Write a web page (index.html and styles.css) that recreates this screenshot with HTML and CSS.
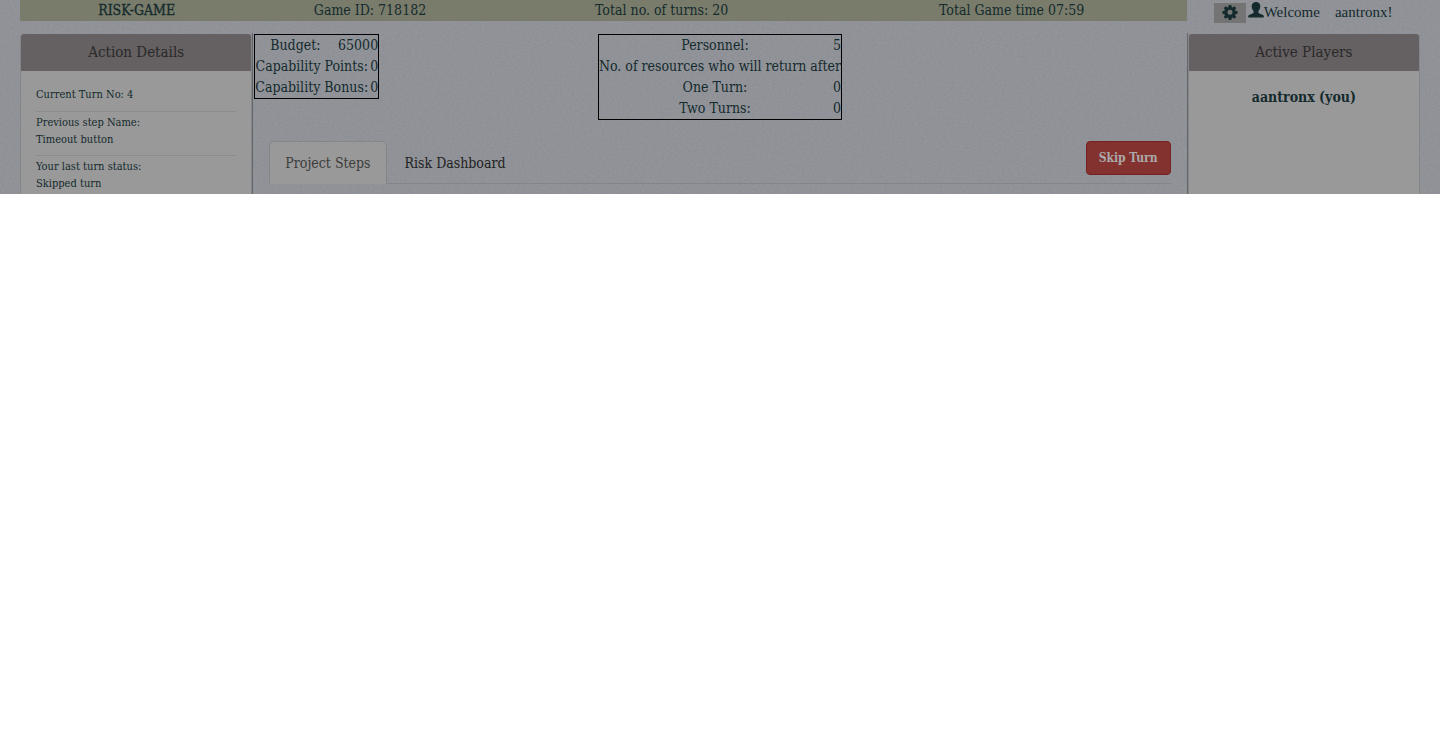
FILE: index.html
```
<!DOCTYPE html>
<html lang="en">
<head>
<meta charset="utf-8">
<meta name="viewport" content="width=device-width, initial-scale=1">
<title>Risk-Game</title>
<link rel="stylesheet" href="styles.css">
</head>
<body>
<div class="app">
  <svg class="texture" aria-hidden="true">
    <filter id="weave" x="0" y="0" width="100%" height="100%">
      <feTurbulence type="fractalNoise" baseFrequency="0.4 0.55" numOctaves="2" seed="4"/>
      <feColorMatrix values="0 0 0 0 0.2  0 0 0 0 0.22  0 0 0 0 0.26  1.8 0 0 0 -0.65"/>
    </filter>
    <rect width="100%" height="100%" filter="url(#weave)"/>
  </svg>
  <header class="top">
    <div class="bar brand">RISK-GAME</div>
    <div class="bar">Game ID: 718182</div>
    <div class="bar">Total no. of turns: 20</div>
    <div class="bar">Total Game time 07:59</div>
    <div class="user">
      <button class="gear" type="button" aria-label="Settings">
        <svg viewBox="0 0 16 16" width="16" height="16"><path fill="currentColor" fill-rule="evenodd" d="M6.700 1h2.600l.4 2 1 .4 1.700-1.100 1.800 1.800-1.100 1.700.4 1 2 .4v2.600l-2 .4-.4 1 1.100 1.700-1.800 1.800-1.700-1.100-1 .4-.4 2H6.700l-.4-2-1-.4-1.700 1.100-1.800-1.800 1.100-1.700-.4-1-2-.4V7.200l2-.4.4-1L1.800 4.100l1.800-1.800 1.700 1.100 1-.4zM8 5.700a2.500 2.500 0 1 0 0 5 2.500 2.500 0 0 0 0-5z"/></svg>
      </button>
      <svg class="person" viewBox="0 0 16 16" width="16" height="16" aria-hidden="true"><path fill="currentColor" d="M8 0c2.700 0 4.300 1.600 4.300 4.300 0 2-.7 3.700-1.900 4.700v1.200c0 .6.300.9.900 1.200l3.200 1.300c.9.400 1.300 1 1.300 2.100v.700H.2v-.7c0-1.100.4-1.700 1.300-2.100l3.200-1.300c.6-.3.900-.6.900-1.200V9C4.400 8 3.700 6.300 3.700 4.300 3.700 1.600 5.300 0 8 0z"/></svg>
      <span>Welcome</span><span class="name">aantronx!</span>
    </div>
  </header>
  <main class="columns">
    <section class="panel actions">
      <h2 class="panel-title">Action Details</h2>
      <div class="details">
        <p>Current Turn No: 4</p>
        <p>Previous step Name:<br>Timeout button</p>
        <p>Your last turn status:<br>Skipped turn</p>
      </div>
    </section>
    <section class="center">
      <div class="stats">
        <table class="stat">
          <colgroup><col class="lead"><col><col></colgroup>
          <tr><th scope="row">Budget:</th><td colspan="2">65000</td></tr>
          <tr><th scope="row" colspan="2">Capability Points:</th><td>0</td></tr>
          <tr><th scope="row" colspan="2">Capability Bonus:</th><td>0</td></tr>
        </table>
        <table class="stat people">
          <tr><th scope="row">Personnel:</th><td>5</td></tr>
          <tr><th colspan="2">No. of resources who will return after</th></tr>
          <tr><th scope="row">One Turn:</th><td>0</td></tr>
          <tr><th scope="row">Two Turns:</th><td>0</td></tr>
        </table>
      </div>
      <nav class="tabs">
        <a class="tab active" href="#steps">Project Steps</a>
        <a class="tab" href="#risk">Risk Dashboard</a>
        <button class="skip" type="button">Skip Turn</button>
      </nav>
    </section>
    <section class="panel players">
      <h2 class="panel-title">Active Players</h2>
      <p class="player">aantronx (you)</p>
    </section>
  </main>
</div>
</body>
</html>
```
FILE: styles.css
```
* { box-sizing: border-box; }
body { margin: 0; background: #fff; color: #142a2d; font: 14px/21px "DejaVu Serif Condensed", "DejaVu Serif", serif; }
h2, p { margin: 0; font-weight: normal; }
.app { position: relative; padding: 0 20px; background: #929499; overflow: hidden; }
.texture { position: absolute; inset: 0; width: 100%; height: 100%; opacity: .35; }
.top { position: relative; display: grid; grid-template-columns: 2fr 2fr 3fr 3fr 2fr; grid-template-rows: 21px; margin-bottom: 12px; }
.bar { background: #797c6b; text-align: center; }
.brand { -webkit-text-stroke: .3px; }
.user { display: flex; align-items: flex-start; padding-left: 27px; padding-top: 2px; font: 15px/20px "Liberation Serif", serif; white-space: nowrap; }
.gear { width: 32px; height: 20px; margin-top: 1px; padding: 0 0 2px; border: 0; background: #747474; color: inherit; display: grid; place-items: center; }
.person { margin-left: 2px; }
.name { margin-left: 15px; }
.columns { position: relative; display: grid; grid-template-columns: 2fr 8fr 2fr; }
.panel { margin-top: 1px; border: 1px solid #858688; border-width: 0 1px; border-radius: 4px 4px 0 0; background: #999; }
.actions { margin-right: 1px; }
.players { margin-left: 1px; }
.panel-title { height: 37px; font-size: 15px; line-height: 37px; text-align: center; color: #292929; background: #656061; border-radius: 3px 3px 0 0; }
.details { padding: 10px 15px 0; font-size: 11px; line-height: 17px; }
.details p { padding: 2px 0 7px; border-bottom: 1px solid #8c8c8c; }
.details p:first-child { padding: 5px 0 8px; }
.details p:last-child { padding-bottom: 2px; border: 0; }
.center { margin: 0 -1px; border: solid #63666a; border-width: 0 1px; min-width: 0; }
.stats { display: grid; grid-template-columns: 1fr auto 1fr; align-items: start; padding: 1px 1px 0; height: 108px; }
.stat { justify-self: start; border: 1px solid #000; border-collapse: separate; border-spacing: 0; white-space: nowrap; }
.stat th, .stat td { padding: 0; font-weight: normal; text-align: center; }
.stat td { text-align: right; padding-left: 2px; }
.lead { width: 80px; }
.people td { width: 1px; }
.tabs { display: flex; align-items: flex-start; margin: 0 16px; border-bottom: 1px solid #838589; }
.tab { padding: 11px 15px 9px; border: 1px solid transparent; border-bottom: 0; margin-right: 2px; color: #222; text-decoration: none; }
.tab.active { margin-bottom: -1px; padding-bottom: 10px; color: #3c3c3c; background: #999; border-color: #858688; border-radius: 4px 4px 0 0; }
.skip { margin-left: auto; height: 34px; padding: 0 12px; border: 1px solid #762320; border-radius: 4px; background: #83322f; color: #aaa; font: inherit; font-size: 12px; font-weight: bold; }
.player { padding-top: 16px; text-align: center; font-weight: bold; }
```
